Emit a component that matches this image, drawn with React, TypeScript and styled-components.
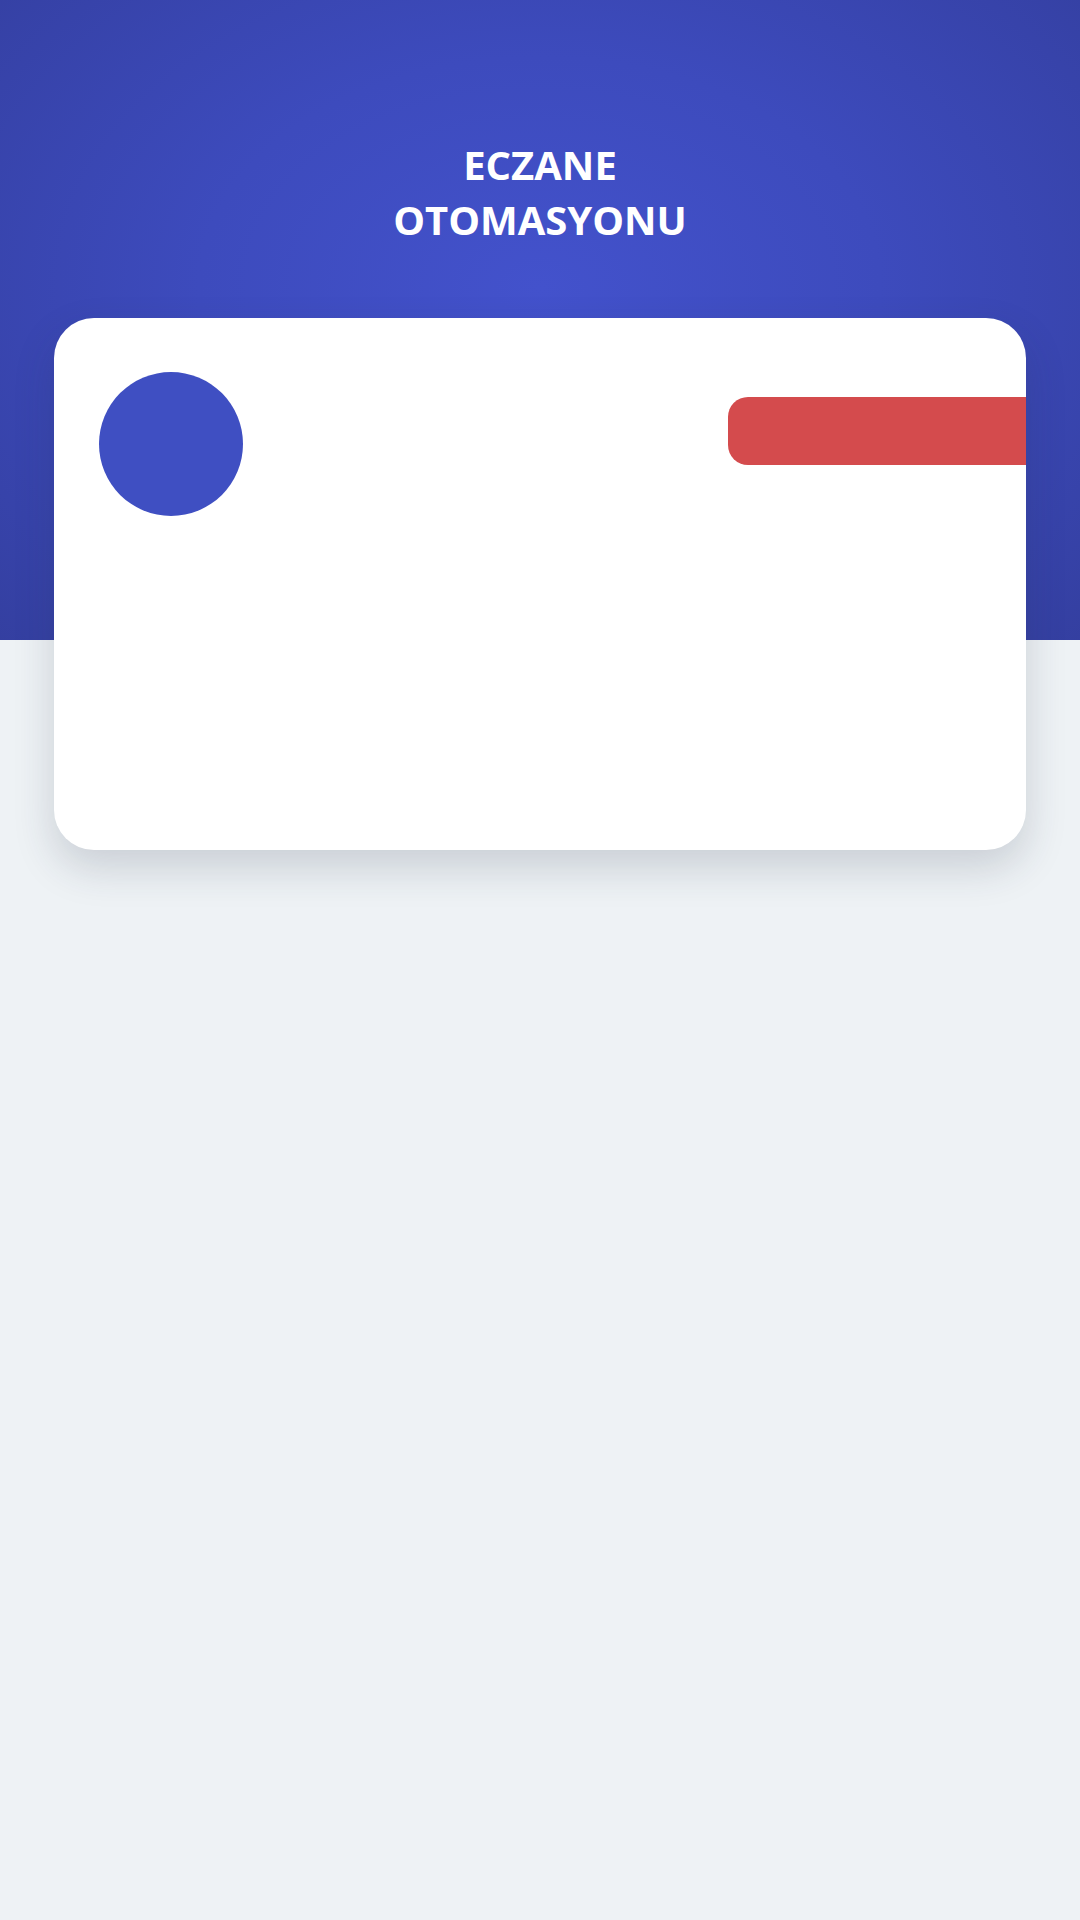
import React from "react";
import styled, { createGlobalStyle } from "styled-components";

const GlobalStyle = createGlobalStyle`
  html, body {
    margin: 0;
    padding: 0;
    background: #eef2f5;
    font-family: "Open Sans", "Noto Sans", sans-serif;
  }
  * { box-sizing: border-box; }
`;

const Page = styled.div`
  min-height: 1920px;
  background: #eef2f5;
`;

const Header = styled.header`
  height: 640px;
  background: radial-gradient(ellipse 70% 80% at 50% 45%, #4352cc 0%, #3d4bbd 45%, #343fa0 100%);
  display: flex;
  flex-direction: column;
  align-items: center;
  padding-top: 137px;
`;

const Title = styled.h1`
  margin: 0;
  max-width: 320px;
  text-align: center;
  color: #ffffff;
  font-family: "Open Sans", "Noto Sans", sans-serif;
  font-weight: 700;
  font-size: 40px;
  line-height: 55px;
`;

const Card = styled.section`
  margin: -322px 54px 0;
  height: 532px;
  background: #ffffff;
  border-radius: 40px;
  box-shadow: 0 18px 40px rgba(40, 50, 70, 0.18);
  overflow: hidden;
  padding: 54px 45px;
`;

const TopRow = styled.div`
  display: flex;
  align-items: flex-start;
`;

const Avatar = styled.div`
  width: 144px;
  height: 144px;
  border-radius: 50%;
  background: #3f4fc2;
  flex-shrink: 0;
`;

const AlertBar = styled.div`
  margin-left: auto;
  margin-right: -95px;
  margin-top: 25px;
  width: 348px;
  height: 68px;
  flex-shrink: 0;
  border-radius: 20px;
  background: #d44b4d;
`;

export default function App() {
  return (
    <Page>
      <GlobalStyle />
      <Header>
        <Title>ECZANE OTOMASYONU</Title>
      </Header>
      <Card>
        <TopRow>
          <Avatar />
          <AlertBar />
        </TopRow>
      </Card>
    </Page>
  );
}
